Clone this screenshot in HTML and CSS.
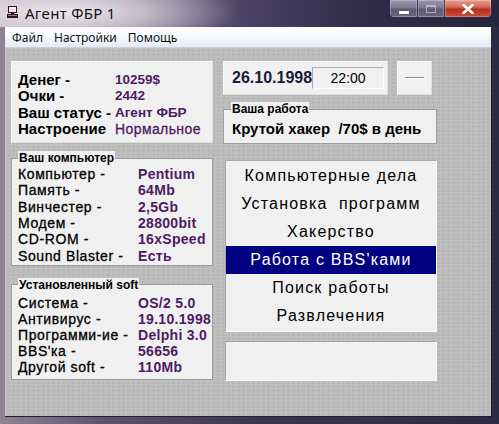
FILE: index.html
```html
<!DOCTYPE html>
<html lang="ru">
<head>
<meta charset="utf-8">
<title>Агент ФБР 1</title>
<link rel="stylesheet" href="styles.css">
</head>
<body>
<div class="window">
  <div class="titlebar">
    <svg class="app-icon" width="11" height="12" viewBox="0 0 11 12">
      <rect x="1.5" y="0.5" width="8" height="6" fill="#f2ecf2" stroke="#3a1022"/>
      <rect x="4" y="7" width="3" height="1" fill="#3a1022"/>
      <rect x="0" y="8" width="11" height="4" fill="#3a1022"/>
      <rect x="1" y="9" width="9" height="1" fill="#a87888"/>
    </svg>
    <span class="title">Агент ФБР 1</span>
    <div class="caption-buttons">
      <div class="cbtn cmin"><span class="min-bar"></span></div>
      <div class="cbtn cmax"><span class="max-box"></span></div>
      <div class="cbtn cclose">
        <svg width="12" height="10" viewBox="0 0 12 10"><path d="M1.5 1 L10.5 9 M10.5 1 L1.5 9" stroke="#fff" stroke-width="2.6" stroke-linecap="square"/></svg>
      </div>
    </div>
  </div>
  <div class="menubar">
    <span class="menu-item">Файл</span>
    <span class="menu-item">Настройки</span>
    <span class="menu-item">Помощь</span>
  </div>
  <div class="client">
    <div class="col-left">
      <div class="panel stats">
        <div class="srow"><span class="slbl">Денег -</span><span class="sval">10259$</span></div>
        <div class="srow"><span class="slbl">Очки -</span><span class="sval">2442</span></div>
        <div class="srow"><span class="slbl">Ваш статус -</span><span class="sval">Агент ФБР</span></div>
        <div class="srow"><span class="slbl">Настроение</span><span class="sval mood">Нормальное</span></div>
      </div>
      <fieldset class="group comp">
        <legend>Ваш компьютер</legend>
        <div class="row"><span class="lbl">Компьютер -</span><span class="val">Pentium</span></div>
        <div class="row"><span class="lbl">Память -</span><span class="val">64Mb</span></div>
        <div class="row"><span class="lbl">Винчестер -</span><span class="val">2,5Gb</span></div>
        <div class="row"><span class="lbl">Модем -</span><span class="val">28800bit</span></div>
        <div class="row"><span class="lbl">CD-ROM -</span><span class="val">16xSpeed</span></div>
        <div class="row"><span class="lbl">Sound Blaster -</span><span class="val">Есть</span></div>
      </fieldset>
      <fieldset class="group soft">
        <legend>Установленный soft</legend>
        <div class="row"><span class="lbl">Система -</span><span class="val">OS/2 5.0</span></div>
        <div class="row"><span class="lbl">Антивирус -</span><span class="val">19.10.1998</span></div>
        <div class="row"><span class="lbl">Программи-ие -</span><span class="val">Delphi 3.0</span></div>
        <div class="row"><span class="lbl">BBS'ка -</span><span class="val">56656</span></div>
        <div class="row"><span class="lbl">Другой soft -</span><span class="val">110Mb</span></div>
      </fieldset>
    </div>
    <div class="col-right">
      <div class="top-row">
        <div class="panel datebox">
          <span class="date">26.10.1998</span>
          <span class="time">22:00</span>
        </div>
        <div class="panel smallbox"><span class="dash"></span></div>
      </div>
      <fieldset class="group job">
        <legend>Ваша работа</legend>
        <div class="job-text">Крутой хакер&nbsp; /70$ в день</div>
      </fieldset>
      <ul class="actions">
        <li>Компьютерные дела</li>
        <li>Установка&nbsp; программ</li>
        <li>Хакерство</li>
        <li class="selected">Работа с BBS'ками</li>
        <li>Поиск работы</li>
        <li>Развлечения</li>
      </ul>
      <div class="status-box"></div>
    </div>
  </div>
</div>
</body>
</html>
```

FILE: styles.css
```css
* { box-sizing: border-box; }
html, body { margin: 0; padding: 0; }
body {
  width: 499px;
  height: 424px;
  overflow: hidden;
  background: #2a2640;
  font-family: "Liberation Sans", Arial, sans-serif;
}
.window {
  width: 499px;
  height: 424px;
  display: flex;
  flex-direction: column;
  background: linear-gradient(to right, #8e8494 0%, #5e5472 20%, #3c3654 50%, #2c2a46 100%);
}
.titlebar {
  height: 27px;
  flex: none;
  display: flex;
  align-items: flex-start;
  background:
    radial-gradient(ellipse 175px 34px at 64px 12px, rgba(238,234,238,0.97) 0%, rgba(222,216,224,0.7) 45%, rgba(200,192,208,0) 100%),
    linear-gradient(to right, #bdb5c0 0%, #958ca2 22%, #4c4466 48%, #302c4a 72%, #26243e 100%);
}
.app-icon { margin: 6px 0 0 7px; flex: none; }
.title {
  margin: 3px 0 0 7px;
  font-family: "Noto Sans", "Open Sans", sans-serif;
  font-size: 15px;
  line-height: 20px;
  letter-spacing: 0.3px;
  color: #111;
}
.caption-buttons {
  margin-left: auto;
  margin-right: 7px;
  display: flex;
  height: 18px;
  border: 1px solid #2e2c40;
  border-top: none;
  border-radius: 0 0 5px 5px;
  overflow: hidden;
}
.cbtn {
  height: 17px;
  display: flex;
  align-items: center;
  justify-content: center;
  box-shadow: inset 0 0 0 1px rgba(255,255,255,0.25);
}
.cmin {
  width: 28px;
  background: linear-gradient(to bottom, #9a98aa 0%, #7a7890 45%, #5c5a72 55%, #6a6880 100%);
  border-right: 1px solid #34324a;
}
.cmax {
  width: 27px;
  background: linear-gradient(to bottom, #9a98aa 0%, #7a7890 45%, #5c5a72 55%, #6a6880 100%);
  border-right: 1px solid #34324a;
}
.cclose {
  width: 46px;
  background: linear-gradient(to bottom, #e8a090 0%, #d46a56 40%, #b82e1c 55%, #c8503a 100%);
}
.min-bar {
  width: 10px;
  height: 3px;
  margin-top: 7px;
  background: #fff;
  box-shadow: 0 0 1px #222;
}
.max-box {
  width: 10px;
  height: 8px;
  border: 1px solid rgba(225,225,235,0.6);
  border-top-width: 2px;
}
.menubar {
  flex: none;
  height: 21px;
  margin: 0 8px 0 5px;
  padding: 0 0 0 7px;
  display: flex;
  align-items: center;
  gap: 11px;
  background: linear-gradient(to bottom, #ffffff 0%, #f6f8fc 50%, #e6ebf4 100%);
  border-bottom: 1px solid #c8d0e0;
  font-family: "Noto Sans", "Open Sans", sans-serif;
  font-size: 12px;
  color: #111;
}
.client {
  flex: 1;
  margin: 0 7px 7px 5px;
  padding: 13px 0 0 6px;
  display: flex;
  background-color: #bcbcbc;
  background-image:
    radial-gradient(circle at 30% 40%, rgba(255,255,255,0.07) 0 1px, transparent 1.5px),
    radial-gradient(circle at 70% 70%, rgba(0,0,0,0.05) 0 1px, transparent 1.5px);
  background-size: 3px 3px, 5px 4px;
  border-bottom: 1px solid #222;
  border-right: 1px solid #222;
}
.col-left {
  width: 202px;
  display: flex;
  flex-direction: column;
}
.panel {
  background: #f0f0f0;
  border: 1px solid #e0e0e0;
  border-top-color: #fcfcfc;
  border-left-color: #fcfcfc;
}
.stats {
  height: 82px;
  padding: 10px 0 0 6px;
}
.srow {
  display: flex;
  height: 16.3px;
  line-height: 16px;
  align-items: center;
}
.slbl {
  width: 97px;
  font-size: 15px;
  font-weight: bold;
  color: #000;
}
.sval {
  font-size: 13.5px;
  font-weight: bold;
  color: #4e1a62;
}
.sval.mood { font-size: 14px; font-weight: normal; letter-spacing: 0.4px; -webkit-text-stroke: 0.3px #4e1a62; }
.group {
  margin: 0;
  padding: 1px 0 1px 6px;
  border: 1px solid #9c9c9c;
  background: #f0f0f0;
  min-width: 0;
}
.group legend {
  padding: 0 1px;
  margin-left: 0;
  font-size: 12px;
  line-height: 14px;
  font-weight: bold;
  color: #000;
  background: #f0f0f0;
}
.comp { margin-top: 8px; }
.soft { margin-top: 12px; padding-top: 3px; padding-bottom: 4px; }
.row {
  display: flex;
  height: 16.3px;
  line-height: 16px;
  align-items: center;
}
.soft .row { height: 16px; }
.lbl {
  width: 120px;
  flex: none;
  white-space: nowrap;
  font-size: 14px;
  letter-spacing: 0.6px;
  color: #000;
  -webkit-text-stroke: 0.3px #000;
}
.val {
  font-size: 14px;
  font-weight: bold;
  color: #4e1a62;
  letter-spacing: 0.3px;
}
.col-right {
  width: 214px;
  margin-left: 10px;
  display: flex;
  flex-direction: column;
}
.top-row {
  display: flex;
  gap: 9px;
  height: 34px;
}
.datebox {
  width: 165px;
  display: flex;
  align-items: center;
  padding-left: 8px;
}
.date {
  font-size: 16px;
  font-weight: bold;
  color: #1a1a3c;
}
.time {
  width: 72px;
  height: 22px;
  line-height: 20px;
  text-align: center;
  font-size: 14px;
  color: #000;
  border: 1px solid #fff;
  border-top-color: #a8a8a8;
  border-left-color: #a8a8a8;
}
.smallbox {
  width: 35px;
  display: flex;
  align-items: center;
  justify-content: center;
}
.dash {
  width: 19px;
  height: 2px;
  border-top: 1px solid #8a8a8a;
  border-bottom: 1px solid #fff;
}
.job {
  margin-top: 7px;
  padding: 4px 0 5px 8px;
}
.job legend { margin-left: -1px; }
.job-text {
  font-size: 15px;
  font-weight: bold;
  line-height: 18px;
  color: #000;
}
.actions {
  list-style: none;
  margin: 16px 0 0 2px;
  padding: 1px 0;
  width: 212px;
  background: #f0f0f0;
  border: 1px solid #f8f8f8;
  border-left-color: #a8a8a8;
  border-top-color: #a8a8a8;
}
.actions li {
  height: 28px;
  line-height: 28px;
  text-align: center;
  white-space: nowrap;
  font-size: 16px;
  letter-spacing: 1.2px;
  color: #000;
}
.actions li.selected {
  background: #000080;
  color: #fff;
}
.status-box {
  margin: 9px 0 0 2px;
  width: 212px;
  height: 40px;
  background: #f0f0f0;
  border: 1px solid #f8f8f8;
  border-left-color: #a8a8a8;
  border-top-color: #a8a8a8;
}
```
